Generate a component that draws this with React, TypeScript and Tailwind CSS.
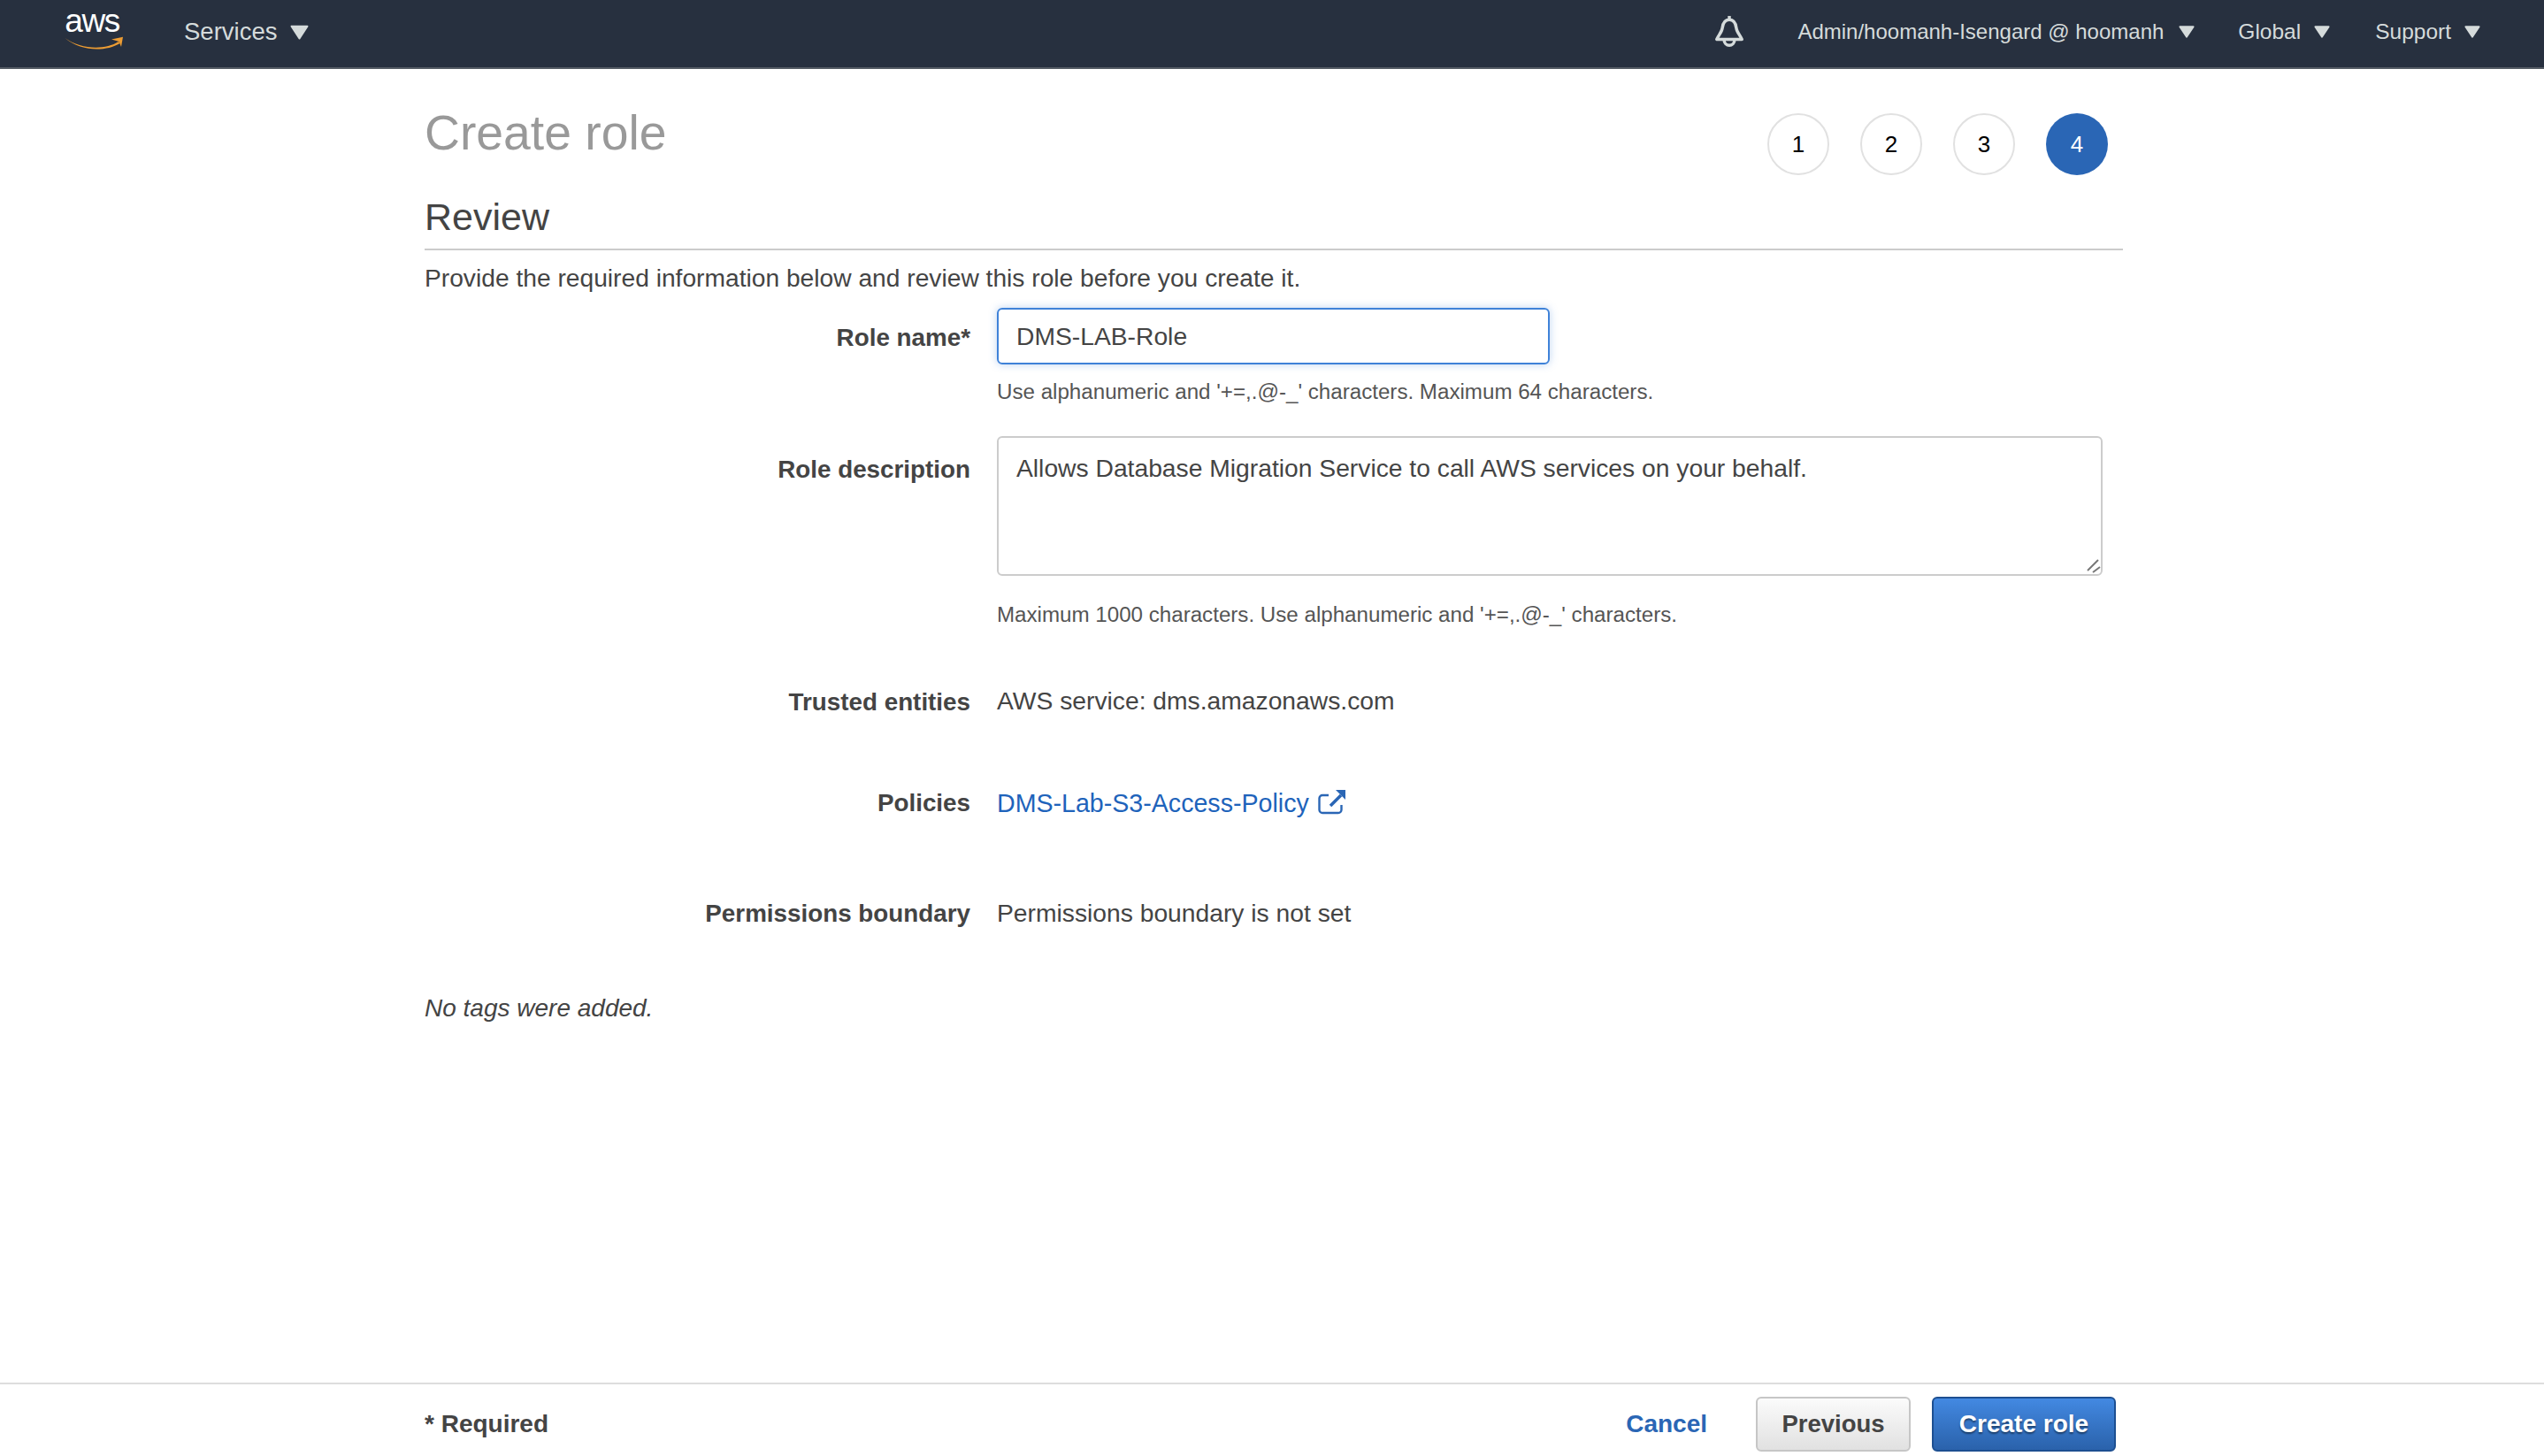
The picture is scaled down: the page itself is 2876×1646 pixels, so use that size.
const sans = "font-['Liberation_Sans',Arial,sans-serif]";

const Caret = ({ className = "" }: { className?: string }) => (
  <svg viewBox="0 0 20 16" className={className} fill="#d5dbdb">
    <path d="M1.500 1.500h17L10 14.500z" stroke="#d5dbdb" strokeWidth="2" strokeLinejoin="round" />
  </svg>
);

const NavItem = ({ label, gap, size }: { label: string; gap: string; size: string }) => (
  <div className={`flex items-center ${gap}`}>
    <span className={`${size} leading-none text-[#d5dbdb]`}>{label}</span>
    <Caret className="h-[16px] w-[18px]" />
  </div>
);

const Bell = () => (
  <svg viewBox="0 0 32 36" className="h-[38px] w-[34px]" fill="none" stroke="#d5dbdb" strokeWidth="3.300" strokeLinejoin="round">
    <path d="M16 1v4" />
    <path d="M16 5c-6 0-7 5-7.500 9-.5 4-3.500 7-6 12h27c-2.500-5-5.500-8-6-12-.5-4-1.500-9-7.500-9z" />
    <path d="M10.500 27a5.500 5.500 0 0 0 11 0" />
  </svg>
);

const Step = ({ n, active }: { n: number; active?: boolean }) => (
  <div
    className={`flex h-[70px] w-[70px] items-center justify-center rounded-full text-[26px] ${
      active ? "bg-[#2a66b5] text-white" : "border-2 border-[#e1e1e1] bg-white text-black"
    }`}
  >
    {n}
  </div>
);

const Row = ({
  label,
  children,
  className = "",
  labelClass = "",
}: {
  label: string;
  children: React.ReactNode;
  className?: string;
  labelClass?: string;
}) => (
  <div className={`grid grid-cols-[617px_1fr] gap-x-[30px] ${className}`}>
    <div className={`text-right text-[27.800px] font-bold leading-[36px] text-[#444] ${labelClass}`}>{label}</div>
    <div className="text-[28.250px] leading-[36px] text-[#444]">{children}</div>
  </div>
);

const ExternalIcon = () => (
  <svg viewBox="6 4 32 29" className="mb-[3px] h-[29px] w-[32px]" fill="none" stroke="#2a66b5" strokeWidth="2.400">
    <path d="M18 11h-7a3.500 3.500 0 0 0-3.500 3.500v13a3.500 3.500 0 0 0 3.500 3.500h18a3.500 3.500 0 0 0 3.500-3.500V22" />
    <path d="M20 23 32 11" strokeWidth="3.500" />
    <path d="M26 5h11v11z" fill="#2a66b5" stroke="none" />
  </svg>
);

export default function App() {
  return (
    <div className={`flex h-screen flex-col overflow-hidden bg-white ${sans}`}>
      <header className="flex h-[78px] shrink-0 items-center border-b-2 border-[#545b64] bg-[#27303f] pb-[4px] pl-[73px] pr-[72px]">
        <div className="relative flex h-[44px] w-[68px] flex-col">
          <span className="pr-[6px] text-center text-[37px] font-light leading-[19px] tracking-[-1.500px] text-white">aws</span>
          <svg viewBox="0 0 68 16" className="absolute left-0 top-[27px] h-[16px] w-[68px]" fill="#ec9c33">
            <path d="M.5 2C18 15 46 16 61 6l1.500 2C46 18 18 17 .5 2z" />
            <path d="M53 3.500 66 .7 64 12 61.500 6z" />
          </svg>
        </div>
        <div className="ml-[67px] flex items-center gap-[15px]">
          <span className="text-[27.500px] leading-none text-[#d5dbdb]">Services</span>
          <Caret className="h-[17px] w-[21px]" />
        </div>
        <div className="ml-auto flex items-center">
          <Bell />
          <div className="ml-[60px]">
            <NavItem label="Admin/hoomanh-Isengard @ hoomanh" gap="gap-[17px]" size="text-[24px]" />
          </div>
          <div className="ml-[49px]">
            <NavItem label="Global" gap="gap-[15px]" size="text-[24.500px]" />
          </div>
          <div className="ml-[51px]">
            <NavItem label="Support" gap="gap-[15px]" size="text-[24.500px]" />
          </div>
        </div>
      </header>

      <main className="ml-[480px] w-[1920px] flex-1 pt-[50px]">
        <div className="flex items-start justify-between pr-[17px]">
          <h1 className="-mt-[5px] text-[55.300px] leading-none text-[#999]">Create role</h1>
          <div className="flex gap-[35px]">
            <Step n={1} />
            <Step n={2} />
            <Step n={3} />
            <Step n={4} active />
          </div>
        </div>
        <h2 className="mt-[26px] text-[43px] leading-none text-[#444]">Review</h2>
        <div className="mt-[14px] h-[2px] bg-[#ccc]" />
        <p className="mt-[13px] text-[28.200px] leading-[36px] text-[#444]">
          Provide the required information below and review this role before you create it.
        </p>

        <Row label="Role name*" className="mt-[16px]" labelClass="pt-[16px]">
          <input
            defaultValue="DMS-LAB-Role"
            className="block h-[64px] w-[625px] rounded-[6px] border-2 border-[#3f82d8] px-[20px] text-[28.250px] text-[#444] shadow-[0_0_10px_rgba(63,130,216,0.35)] outline-none"
          />
          <div className="mt-[17px] text-[24.150px] leading-[28px] text-[#555]">
            Use alphanumeric and '+=,.@-_' characters. Maximum 64 characters.
          </div>
        </Row>

        <Row label="Role description" className="mt-[36px]" labelClass="pt-[20px]">
          <div className="relative w-[1250px]">
            <textarea
              defaultValue="Allows Database Migration Service to call AWS services on your behalf."
              className="block h-[158px] w-full resize-none rounded-[6px] border-2 border-[#ccc] px-[20px] py-[16px] text-[28.250px] leading-[36px] text-[#444] outline-none"
            />
            <svg viewBox="0 0 18 18" className="absolute bottom-[2px] right-[2px] h-[18px] w-[18px]" stroke="#777" strokeWidth="2">
              <path d="M3 14 15 2M9 16l8-6" />
            </svg>
          </div>
          <div className="mt-[30px] text-[24.150px] leading-[28px] text-[#555]">
            Maximum 1000 characters. Use alphanumeric and '+=,.@-_' characters.
          </div>
        </Row>

        <Row label="Trusted entities" className="mt-[65px]" labelClass="pt-[2px]">
          AWS service: dms.amazonaws.com
        </Row>

        <Row label="Policies" className="mt-[78px]">
          <a className="inline-flex items-center gap-[10px] text-[28.600px] text-[#1e63bb]">
            DMS-Lab-S3-Access-Policy
            <ExternalIcon />
          </a>
        </Row>

        <Row label="Permissions boundary" className="mt-[88px]" labelClass="pt-[1px]">
          Permissions boundary is not set
        </Row>

        <p className="mt-[71px] text-[28px] italic leading-[36px] text-[#444]">No tags were added.</p>
      </main>

      <footer className="flex h-[83px] shrink-0 items-start border-t-2 border-[#ddd] pl-[480px] pr-[484px] pt-[14px]">
        <span className="mt-[13px] text-[28px] font-bold leading-[36px] text-[#444]">* Required</span>
        <div className="ml-auto flex items-center">
          <a className="text-[28px] font-bold text-[#2a66b5]">Cancel</a>
          <button className="ml-[55px] h-[62px] w-[175px] rounded-[6px] border-2 border-[#c6c6c6] bg-gradient-to-b from-[#fbfbfb] to-[#e1e1e1] text-[27.500px] font-bold text-[#444]">
            Previous
          </button>
          <button className="ml-[24px] h-[62px] w-[208px] rounded-[6px] border-2 border-[#1d4f91] bg-gradient-to-b from-[#4389e2] to-[#2a62ab] text-[28px] font-bold text-white [text-shadow:0_2px_2px_rgba(0,0,0,0.45)]">
            Create role
          </button>
        </div>
      </footer>
    </div>
  );
}
